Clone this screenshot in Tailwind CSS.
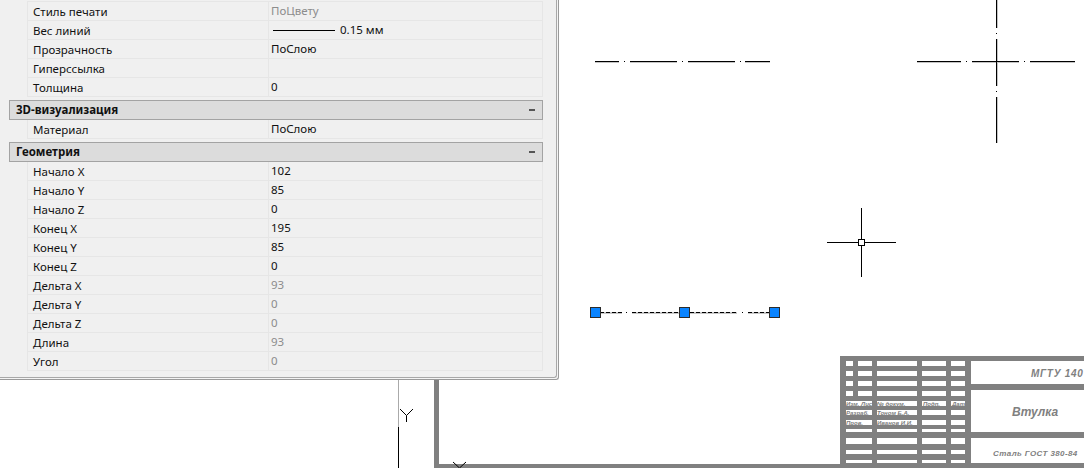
<!DOCTYPE html>
<html lang="ru">
<head>
<meta charset="UTF-8">
<title>Свойства</title>
<script src="https://cdn.jsdelivr.net/npm/@tailwindcss/browser@4"></script>
</head>
<body class="bg-white overflow-hidden">
<div class="relative w-[1084px] h-[468px] overflow-hidden bg-white font-['Noto_Sans',sans-serif] text-[11.5px] text-[#111]">

  <!-- чертёж -->
  <svg class="absolute left-0 top-0" width="1084" height="468" viewBox="0 0 1084 468" shape-rendering="crispEdges">
    <!-- осевая слева -->
    <g fill="#c4c4c4">
      <rect x="595" y="62" width="24" height="1"/><rect x="630" y="62" width="47" height="1"/><rect x="688" y="62" width="47" height="1"/><rect x="745" y="62" width="25" height="1"/>
      <rect x="917" y="62" width="44" height="1"/><rect x="972" y="62" width="47" height="1"/><rect x="1030" y="62" width="45" height="1"/>
      <rect x="997" y="0" width="1" height="28"/><rect x="997" y="39" width="1" height="47"/><rect x="997" y="97" width="1" height="46"/>
    </g>
    <g fill="#000">
      <rect x="595" y="61" width="24" height="1"/><rect x="624" y="61" width="1" height="1"/><rect x="630" y="61" width="47" height="1"/><rect x="682" y="61" width="1" height="1"/><rect x="688" y="61" width="47" height="1"/><rect x="740" y="61" width="1" height="1"/><rect x="745" y="61" width="25" height="1"/>
      <!-- осевые справа -->
      <rect x="917" y="61" width="44" height="1"/><rect x="966" y="61" width="1" height="1"/><rect x="972" y="61" width="47" height="1"/><rect x="1024" y="61" width="1" height="1"/><rect x="1030" y="61" width="45" height="1"/>
      <rect x="996" y="0" width="1" height="28"/><rect x="996" y="33" width="1" height="1"/><rect x="996" y="39" width="1" height="47"/><rect x="996" y="91" width="1" height="1"/><rect x="996" y="97" width="1" height="46"/>
      <!-- перекрестие -->
      <rect x="827" y="242" width="69" height="1"/><rect x="861" y="208" width="1" height="69"/>
    </g>
    <rect x="858.5" y="239.5" width="6" height="6" fill="#fff" stroke="#000"/>

    <!-- выбранный отрезок -->
    <g fill="#c8c8c8">
      <rect x="600" y="312" width="22" height="2"/><rect x="632" y="312" width="47" height="2"/><rect x="690" y="312" width="47" height="2"/><rect x="748" y="312" width="21" height="2"/>
    </g>
    <g stroke="#000" stroke-dasharray="4 2" fill="none">
      <path d="M600 312.5H622"/><path d="M632 312.5H679"/><path d="M690 312.5H737"/><path d="M748 312.5H769"/>
    </g>
    <rect x="626" y="312" width="1" height="1"/><rect x="742" y="312" width="1" height="1"/>
    <g fill="#0a84ff" stroke="#2b2b2b">
      <rect x="590.5" y="307.5" width="10" height="10"/><rect x="679.5" y="307.5" width="10" height="10"/><rect x="769.5" y="307.5" width="10" height="10"/>
    </g>

    <!-- ось Y и рамка -->
    <rect x="398" y="370" width="1" height="57" fill="#aaa"/>
    <rect x="398" y="427" width="1" height="41" fill="#000"/>
    <path d="M400 409L406.5 415.5L413 409M406.5 415.5V422" stroke="#000" fill="none" shape-rendering="auto"/>
    <rect x="434" y="370" width="5" height="98" fill="#808080"/>
    <rect x="434" y="464" width="650" height="4" fill="#808080"/>
    <path d="M453 462L459.5 468L466 462" stroke="#000" fill="none" shape-rendering="auto"/>

    <!-- основная надпись -->
    <rect x="840" y="356" width="244" height="112" fill="#808080"/>
    <g fill="#fff">
      <rect x="846" y="361" width="7" height="5"/><rect x="858" y="361" width="14" height="5"/><rect x="877" y="361" width="40" height="5"/><rect x="922" y="361" width="24" height="5"/><rect x="951" y="361" width="14" height="5"/>
      <rect x="846" y="371" width="7" height="5"/><rect x="858" y="371" width="14" height="5"/><rect x="877" y="371" width="40" height="5"/><rect x="922" y="371" width="24" height="5"/><rect x="951" y="371" width="14" height="5"/>
      <rect x="846" y="381" width="7" height="5"/><rect x="858" y="381" width="14" height="5"/><rect x="877" y="381" width="40" height="5"/><rect x="922" y="381" width="24" height="5"/><rect x="951" y="381" width="14" height="5"/>
      <rect x="846" y="391" width="7" height="5"/><rect x="858" y="391" width="14" height="5"/><rect x="877" y="391" width="40" height="5"/><rect x="922" y="391" width="24" height="5"/><rect x="951" y="391" width="14" height="5"/>
      <rect x="846" y="401" width="26" height="5"/><rect x="877" y="401" width="40" height="5"/><rect x="922" y="401" width="24" height="5"/><rect x="951" y="401" width="14" height="5"/>
      <rect x="846" y="410" width="26" height="5"/><rect x="877" y="410" width="40" height="5"/><rect x="922" y="410" width="24" height="5"/><rect x="951" y="410" width="14" height="5"/>
      <rect x="846" y="420" width="26" height="5"/><rect x="877" y="420" width="40" height="5"/><rect x="922" y="420" width="24" height="5"/><rect x="951" y="420" width="14" height="5"/>
      <rect x="846" y="429" width="26" height="3"/><rect x="877" y="429" width="40" height="3"/><rect x="922" y="429" width="24" height="3"/><rect x="951" y="429" width="14" height="3"/>
      <rect x="846" y="438" width="26" height="6"/><rect x="877" y="438" width="40" height="6"/><rect x="922" y="438" width="24" height="6"/><rect x="951" y="438" width="14" height="6"/>
      <rect x="846" y="450" width="26" height="4"/><rect x="877" y="450" width="40" height="4"/><rect x="922" y="450" width="24" height="4"/><rect x="951" y="450" width="14" height="4"/>
      <rect x="846" y="460" width="26" height="3"/><rect x="877" y="460" width="40" height="3"/><rect x="922" y="460" width="24" height="3"/><rect x="951" y="460" width="14" height="3"/>
      <rect x="971" y="361" width="113" height="23"/><rect x="971" y="390" width="113" height="42"/><rect x="971" y="438" width="113" height="25"/>
    </g>
    <g fill="#808080" font-family="'Liberation Sans',sans-serif" font-style="italic" shape-rendering="auto">
      <text x="1031" y="377" font-size="10" font-weight="bold" letter-spacing="0.7">МГТУ 140</text>
      <text x="1012" y="416" font-size="12" font-weight="bold">Втулка</text>
      <text x="993" y="456" font-size="8" font-weight="bold" letter-spacing="0.4">Сталь ГОСТ 380-84</text>
      <g font-size="6" font-weight="bold">
        <text x="846" y="406">Изм. Лист</text><text x="877" y="406">№ докум.</text><text x="923" y="406">Подп.</text><text x="952" y="406">Дата</text>
        <text x="846" y="415">Разраб.</text><text x="877" y="415">Тоном Б.А.</text>
        <text x="846" y="425">Пров.</text><text x="877" y="425">Иванов И.И.</text>
      </g>
    </g>
  </svg>

  <!-- палитра свойств -->
  <div class="absolute left-0 top-0 w-[559px] h-[380px] border-r border-b border-[#9a9a9a] rounded-br-[3px] bg-[#f4f4f4]">
    <div class="h-[378px] w-[557px] border-r border-b border-[#a8a8a8] rounded-br-[3px] bg-[#f0f0f0] pt-[1px]">
      <div class="w-[543px] pl-[9px] flex flex-col">

        <div class="pl-[18px]">
          <div class="h-[20px] flex border-t border-b border-l border-r border-[#e6e6e6]">
            <div class="w-[241px] pl-[5px] pt-[1px] flex items-center border-r border-[#e6e6e6]">Стиль печати</div>
            <div class="pl-[2px] pb-[1px] flex items-center text-[#8c8c8c]">ПоЦвету</div>
          </div>
          <div class="h-[19px] flex border-b border-l border-r border-[#e6e6e6]">
            <div class="w-[241px] pl-[5px] pt-[1px] flex items-center border-r border-[#e6e6e6]">Вес линий</div>
            <div class="pl-[4px] flex items-center gap-[5px]"><span class="w-[62px] h-px bg-black"></span><span>0.15 мм</span></div>
          </div>
          <div class="h-[19px] flex border-b border-l border-r border-[#e6e6e6]">
            <div class="w-[241px] pl-[5px] pt-[1px] flex items-center border-r border-[#e6e6e6]">Прозрачность</div>
            <div class="pl-[2px] pb-[1px] flex items-center">ПоСлою</div>
          </div>
          <div class="h-[19px] flex border-b border-l border-r border-[#e6e6e6]">
            <div class="w-[241px] pl-[5px] pt-[1px] flex items-center border-r border-[#e6e6e6]">Гиперссылка</div>
            <div class="pl-[2px] pb-[1px] flex items-center"></div>
          </div>
          <div class="h-[19px] flex border-b border-l border-r border-[#e6e6e6]">
            <div class="w-[241px] pl-[5px] pt-[1px] flex items-center border-r border-[#e6e6e6]">Толщина</div>
            <div class="pl-[2px] pb-[1px] flex items-center">0</div>
          </div>
        </div>

        <div class="mt-[3px] h-[20px] flex items-center justify-between pl-[6px] pr-[7px] bg-[#dcdcdc] border-[1.5px] border-[#a3a3a3] font-bold text-[11.5px]">
          <span>3D-визуализация</span><span class="w-[6px] h-[2px] bg-[#555]"></span>
        </div>
        <div class="pl-[18px]">
          <div class="h-[19px] flex border-b border-l border-r border-[#e6e6e6]">
            <div class="w-[241px] pl-[5px] pt-[1px] flex items-center border-r border-[#e6e6e6]">Материал</div>
            <div class="pl-[2px] pb-[1px] flex items-center">ПоСлою</div>
          </div>
        </div>

        <div class="mt-[3px] h-[20px] flex items-center justify-between pl-[6px] pr-[7px] bg-[#dcdcdc] border-[1.5px] border-[#a3a3a3] font-bold text-[11.5px]">
          <span>Геометрия</span><span class="w-[6px] h-[2px] bg-[#555]"></span>
        </div>
        <div class="pl-[18px]">
          <div class="h-[19px] flex border-b border-l border-r border-[#e6e6e6]"><div class="w-[241px] pl-[5px] pt-[1px] flex items-center border-r border-[#e6e6e6]">Начало X</div><div class="pl-[2px] pb-[1px] flex items-center">102</div></div>
          <div class="h-[19px] flex border-b border-l border-r border-[#e6e6e6]"><div class="w-[241px] pl-[5px] pt-[1px] flex items-center border-r border-[#e6e6e6]">Начало Y</div><div class="pl-[2px] pb-[1px] flex items-center">85</div></div>
          <div class="h-[19px] flex border-b border-l border-r border-[#e6e6e6]"><div class="w-[241px] pl-[5px] pt-[1px] flex items-center border-r border-[#e6e6e6]">Начало Z</div><div class="pl-[2px] pb-[1px] flex items-center">0</div></div>
          <div class="h-[19px] flex border-b border-l border-r border-[#e6e6e6]"><div class="w-[241px] pl-[5px] pt-[1px] flex items-center border-r border-[#e6e6e6]">Конец X</div><div class="pl-[2px] pb-[1px] flex items-center">195</div></div>
          <div class="h-[19px] flex border-b border-l border-r border-[#e6e6e6]"><div class="w-[241px] pl-[5px] pt-[1px] flex items-center border-r border-[#e6e6e6]">Конец Y</div><div class="pl-[2px] pb-[1px] flex items-center">85</div></div>
          <div class="h-[19px] flex border-b border-l border-r border-[#e6e6e6]"><div class="w-[241px] pl-[5px] pt-[1px] flex items-center border-r border-[#e6e6e6]">Конец Z</div><div class="pl-[2px] pb-[1px] flex items-center">0</div></div>
          <div class="h-[19px] flex border-b border-l border-r border-[#e6e6e6]"><div class="w-[241px] pl-[5px] pt-[1px] flex items-center border-r border-[#e6e6e6]">Дельта X</div><div class="pl-[2px] pb-[1px] flex items-center text-[#8c8c8c]">93</div></div>
          <div class="h-[19px] flex border-b border-l border-r border-[#e6e6e6]"><div class="w-[241px] pl-[5px] pt-[1px] flex items-center border-r border-[#e6e6e6]">Дельта Y</div><div class="pl-[2px] pb-[1px] flex items-center text-[#8c8c8c]">0</div></div>
          <div class="h-[19px] flex border-b border-l border-r border-[#e6e6e6]"><div class="w-[241px] pl-[5px] pt-[1px] flex items-center border-r border-[#e6e6e6]">Дельта Z</div><div class="pl-[2px] pb-[1px] flex items-center text-[#8c8c8c]">0</div></div>
          <div class="h-[19px] flex border-b border-l border-r border-[#e6e6e6]"><div class="w-[241px] pl-[5px] pt-[1px] flex items-center border-r border-[#e6e6e6]">Длина</div><div class="pl-[2px] pb-[1px] flex items-center text-[#8c8c8c]">93</div></div>
          <div class="h-[19px] flex border-b border-l border-r border-[#e6e6e6]"><div class="w-[241px] pl-[5px] pt-[1px] flex items-center border-r border-[#e6e6e6]">Угол</div><div class="pl-[2px] pb-[1px] flex items-center text-[#8c8c8c]">0</div></div>
        </div>

      </div>
    </div>
  </div>
</div>
</body>
</html>
